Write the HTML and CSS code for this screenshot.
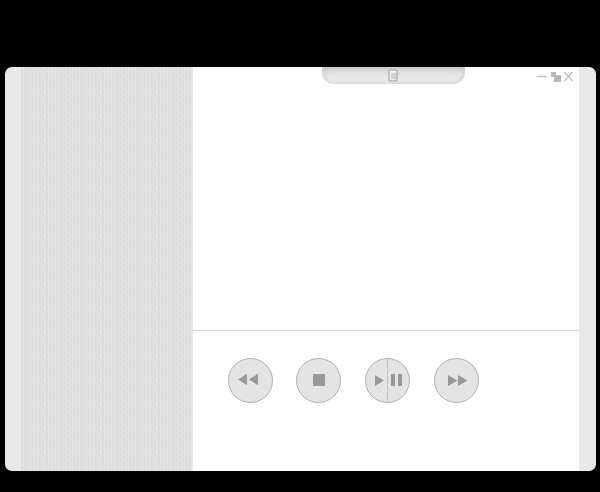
FILE: index.html
```
<!DOCTYPE html>
<html lang="en">
<head>
<meta charset="utf-8">
<title>Player</title>
<link rel="stylesheet" href="styles.css">
</head>
<body>
<div class="player">
  <aside class="sidebar">
    <svg class="texture" width="172" height="404" aria-hidden="true">
      <defs>
        <pattern id="weave" width="7" height="6" patternUnits="userSpaceOnUse">
          <rect width="7" height="6" fill="#e0e0e0"/>
          <path d="M2.500 0v6M6.500 0v6" stroke="#e3e3e3"/>
          <path d="M0.500 0v6M4.500 0v6" stroke="#dedede"/>
          <path d="M2.500 1v3M6.500 4v2M6.500 0v1" stroke="#e7e7e7"/>
          <path d="M1.500 2v3M5.500 5v1M5.500 0v2" stroke="#dadada"/>
        </pattern>
      </defs>
      <rect width="172" height="404" fill="url(#weave)"/>
      <rect x="171" width="1" height="404" fill="#e6e6e6"/>
    </svg>
  </aside>
  <main class="content">
    <section class="screen">
      <div class="tab">
        <svg width="10" height="13" viewBox="0 0 10 13" aria-hidden="true">
          <rect x="1" y="1" width="8" height="11" rx="2" fill="#f0f0f0" stroke="#b9b9b9" stroke-width="1.700"/>
          <path d="M3 4h5v6H3z" fill="#d3d3d3"/>
        </svg>
      </div>
      <div class="window-buttons">
        <svg width="38" height="12" viewBox="0 0 38 12" aria-hidden="true">
          <path d="M0.500 5.500h10" stroke="#c1c1c1" stroke-width="1.500"/>
          <path d="M15 1h5v3h5v7h-7V6h-3z" fill="#b9b9b9"/>
          <path d="M28.500 1l8 9M36.500 1l-8 9" stroke="#bcbcbc" stroke-width="1.400"/>
        </svg>
      </div>
    </section>
    <section class="controls">
      <button class="control" aria-label="Rewind">
        <svg viewBox="0 0 45 45"><path d="M10 21.500l9-5.800v11.600zM21 21.500l9-5.800v11.600z"/></svg>
      </button>
      <button class="control" aria-label="Stop">
        <svg viewBox="0 0 45 45"><path d="M17 16h12v12H17z"/></svg>
      </button>
      <button class="control" aria-label="Play or pause">
        <svg viewBox="0 0 45 45"><path class="divider" d="M22.500 1v43"/><path d="M10 17v11l9-5.500zM26 16h4v12h-4zM33 16h4v12h-4z"/></svg>
      </button>
      <button class="control" aria-label="Fast forward">
        <svg viewBox="0 0 45 45"><path d="M14 17v11l9.500-5.500zM24 17v11l9.500-5.500z"/></svg>
      </button>
    </section>
  </main>
</div>
</body>
</html>
```
FILE: styles.css
```
body {
  margin: 0;
  height: 492px;
  overflow: hidden;
  background: #000;
  display: flow-root;
}

.player {
  display: grid;
  grid-template-columns: 172px 386px;
  box-sizing: border-box;
  width: 591px;
  height: 404px;
  margin: 67px 0 0 5px;
  padding: 0 17px 0 16px;
  border-radius: 7px;
  background: #e9e9e9;
  overflow: hidden;
}

.texture {
  display: block;
}

.content {
  display: grid;
  grid-template-rows: 264px 140px;
  background: #fff;
}

.screen {
  display: flex;
  justify-content: space-between;
  align-items: flex-start;
  box-sizing: border-box;
  padding: 0 5px 0 129px;
  border-bottom: 1px solid #d5d5d5;
}

.tab {
  display: flex;
  justify-content: center;
  box-sizing: border-box;
  width: 143px;
  height: 17px;
  padding: 2px 1px 0 0;
  border-radius: 0 0 12px 12px;
  background: linear-gradient(#cfcfcf, #e4e4e4 45%, #eee);
  box-shadow: inset 0 0 4px #c4c4c4;
}

.window-buttons {
  display: flex;
  padding-top: 4px;
}

.controls {
  display: grid;
  grid-template-columns: 68px 69px 69px 45px;
  padding: 27px 0 0 35px;
}

.control {
  width: 45px;
  height: 45px;
  box-sizing: border-box;
  padding: 0;
  border: 1px solid #b0b0b0;
  border-radius: 50%;
  background: #e4e4e4;
}

.control svg {
  display: block;
  width: 45px;
  height: 45px;
  margin: -1px;
  fill: #999;
}

.divider {
  stroke: #c4c4c4;
}
```
